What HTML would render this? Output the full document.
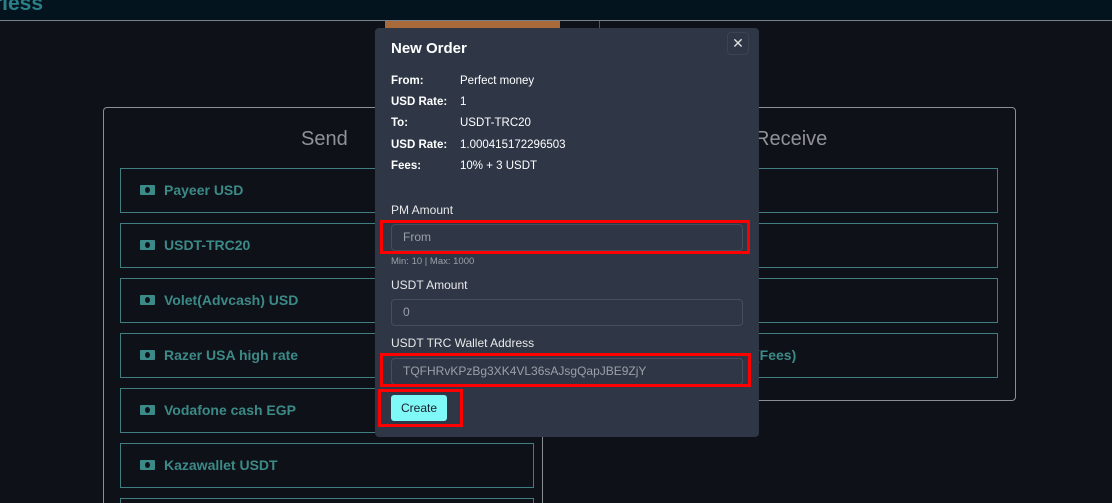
<!DOCTYPE html>
<html style="width:1112px;height:503px;overflow:hidden"><head><style>
*{margin:0;padding:0;box-sizing:border-box}
body{width:1112px;height:503px;overflow:hidden;background:#0e1117;font-family:"Liberation Sans",sans-serif;position:relative}
.hdr{position:absolute;left:0;top:0;width:1112px;height:21px;background:#03141f;border-bottom:1px solid #7a8088}
.hdr span{position:absolute;left:-6px;top:-8px;font-size:21px;font-weight:bold;color:#2b7f88}
.panel{position:absolute;border:1px solid #8a8f96;border-radius:4px}
.ttl{position:absolute;font-size:20px;color:#8f9296}
.item{position:absolute;height:45px;border:1px solid #3f7f7f;color:#3c8a88;font-size:14px;font-weight:bold;line-height:43px;padding-left:43px}
.item i{position:absolute;left:19px;top:16px;width:15px;height:10px;background:#3c8a88;border-radius:1px}
.item i:after{content:"";position:absolute;left:5px;top:2px;width:5px;height:6px;border-radius:50%;background:#0e1117}
.modal{position:absolute;left:375px;top:28px;width:384px;height:409px;background:#2f3747;border-radius:4px;color:#fff}
.modal h3{position:absolute;left:16px;top:12px;font-size:15px;font-weight:bold}
.x{position:absolute;left:352px;top:4px;width:22px;height:23px;border:1px solid #3a4454;border-radius:4px;color:#ddd;text-align:center;font-size:14px;line-height:21px}
.row{position:absolute;left:16px;font-size:11.5px}
.row b{display:inline-block;width:69px}
.lbl{position:absolute;left:16px;font-size:12px;color:#e8e8e8}
.inp{position:absolute;left:16px;width:352px;height:27px;border:1px solid #454e5e;border-radius:4px;font-size:12px;color:#9aa0a8;line-height:25px;padding-left:11px}
.red{position:absolute;border:3px solid #f00}
.btn{position:absolute;left:16px;top:367px;width:56px;height:26px;background:#7ff8f8;border-radius:3px;color:#1a1f2a;font-size:12px;text-align:center;line-height:26px}
</style></head><body>
<div class="hdr"><span>rless</span></div>
<div style="position:absolute;left:385px;top:21px;width:175px;height:8px;background:#a86a3a"></div>
<div style="position:absolute;left:599px;top:21px;width:1px;height:8px;background:#2a6a6a"></div>
<div class="panel" style="left:103px;top:107px;width:440px;height:396px;border-bottom:none;border-radius:4px 4px 0 0"></div>
<div class="panel" style="left:559px;top:107px;width:457px;height:294px"></div>
<div class="ttl" style="left:301px;top:128px">Send</div>
<div class="ttl" style="left:755px;top:128px">Receive</div>
<div class="item" style="left:120px;top:168px;width:414px"><i></i>Payeer USD</div>
<div class="item" style="left:120px;top:223px;width:414px"><i></i>USDT-TRC20</div>
<div class="item" style="left:120px;top:278px;width:414px"><i></i>Volet(Advcash) USD</div>
<div class="item" style="left:120px;top:333px;width:414px"><i></i>Razer USA high rate</div>
<div class="item" style="left:120px;top:388px;width:414px"><i></i>Vodafone cash EGP</div>
<div class="item" style="left:120px;top:443px;width:414px"><i></i>Kazawallet USDT</div>
<div class="item" style="left:120px;top:498px;width:414px;height:5px;border-bottom:none"></div>
<div class="item" style="left:576px;top:168px;width:422px"></div>
<div class="item" style="left:576px;top:223px;width:422px"></div>
<div class="item" style="left:576px;top:278px;width:422px"></div>
<div class="item" style="left:576px;top:333px;width:422px;padding-left:178px">(Fees)</div>
<div class="modal">
<h3>New Order</h3>
<div class="x">✕</div>
<div class="row" style="top:47px"><b>From:</b>Perfect money</div>
<div class="row" style="top:68px"><b>USD Rate:</b>1</div>
<div class="row" style="top:89px"><b>To:</b>USDT-TRC20</div>
<div class="row" style="top:111px"><b>USD Rate:</b>1.000415172296503</div>
<div class="row" style="top:132px"><b>Fees:</b>10% + 3 USDT</div>
<div class="lbl" style="top:175px">PM Amount</div>
<div class="inp" style="top:196px">From</div>
<div class="lbl" style="top:228px;font-size:9.5px;color:#9aa0a8">Min: 10 | Max: 1000</div>
<div class="lbl" style="top:250px">USDT Amount</div>
<div class="inp" style="top:271px">0</div>
<div class="lbl" style="top:308px">USDT TRC Wallet Address</div>
<div class="inp" style="top:330px">TQFHRvKPzBg3XK4VL36sAJsgQapJBE9ZjY</div>
<div class="btn">Create</div>
</div>
<div class="red" style="left:380px;top:220px;width:370px;height:34px"></div>
<div class="red" style="left:380px;top:353px;width:371px;height:34px"></div>
<div class="red" style="left:378px;top:389px;width:85px;height:38px"></div>
</body></html>
